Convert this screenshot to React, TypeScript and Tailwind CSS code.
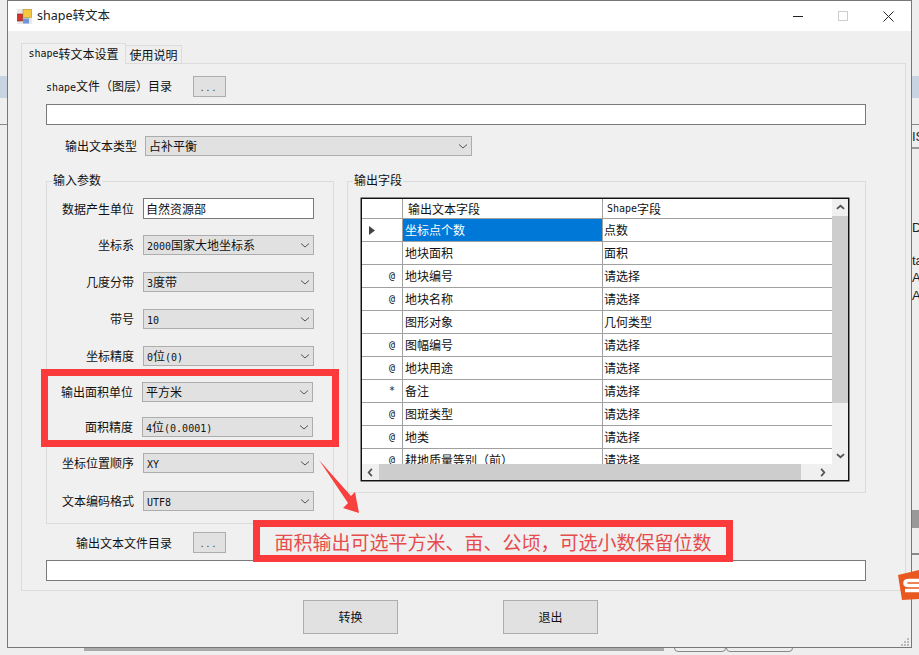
import type { ReactNode } from "react";

const rows: { mark: string; name: ReactNode; field: string }[] = [
  { mark: "", name: "坐标点个数", field: "点数" },
  { mark: "", name: "地块面积", field: "面积" },
  { mark: "@", name: "地块编号", field: "请选择" },
  { mark: "@", name: "地块名称", field: "请选择" },
  { mark: "", name: "图形对象", field: "几何类型" },
  { mark: "@", name: "图幅编号", field: "请选择" },
  { mark: "@", name: "地块用途", field: "请选择" },
  { mark: "*", name: "备注", field: "请选择" },
  { mark: "@", name: "图斑类型", field: "请选择" },
  { mark: "@", name: "地类", field: "请选择" },
  { mark: "@", name: "耕地质量等别（前）", field: "请选择" },
];

function M({ children }: { children: ReactNode }) {
  return <span className="font-['DejaVu_Sans_Mono',monospace] text-[10px]">{children}</span>;
}

function Chevron({ className, d, bold }: { className: string; d: string; bold?: boolean }) {
  return (
    <svg viewBox="0 0 10 10" className={className} fill="none" stroke="currentColor" strokeWidth={bold ? 2 : 1}>
      <path d={d} />
    </svg>
  );
}

function Combo({ value, width = "w-[171px]" }: { value: ReactNode; width?: string }) {
  return (
    <div className={`${width} flex h-[20px] items-center justify-between border border-[#adadad] bg-[#e1e1e1] pl-[3px] pr-[3px] text-[#111]`}>
      <span>{value}</span>
      <Chevron className="h-[10px] w-[10px] text-[#555]" d="M1 3.5 L5 7 L9 3.5" />
    </div>
  );
}

function Dots({ w = "w-[33px]", h = "h-[21px]" }: { w?: string; h?: string }) {
  return (
    <div className={`${w} ${h} flex items-center justify-center border border-[#adadad] bg-[#e1e1e1] text-[10px] tracking-[3px] text-[#333]`}>
      ...
    </div>
  );
}

function ParamRow({ label, mt, shift, children }: { label: string; mt: string; shift?: boolean; children: ReactNode }) {
  return (
    <div className={`flex items-center ${mt} ${shift ? "-translate-x-px" : ""}`}>
      <div className="w-[87px] text-right">{label}</div>
      <div className="ml-[9px]">{children}</div>
    </div>
  );
}

function Legend({ text, className }: { text: string; className: string }) {
  return <div className={`absolute top-[-9px] bg-[#f0f0f0] px-px leading-[14px] ${className}`}>{text}</div>;
}

export default function App() {
  return (
    <div className="relative h-[655px] w-[919px] overflow-hidden bg-[#eeeeee] font-['Noto_Sans_CJK_SC','Liberation_Sans',sans-serif] text-[12px] leading-none text-[#111]">
      {/* stuff behind the dialog */}
      <div className="absolute left-0 top-[76px] h-[22px] w-full bg-[#c8d4e2]" />
      <div className="absolute left-0 top-[124px] h-px w-full bg-[#888]" />
      <div className="absolute right-0 top-[147px] h-[2px] w-[8px] bg-[#999]" />
      <div className="absolute right-0 top-[510px] h-[18px] w-[8px] bg-[#999]" />
      <div className="absolute right-0 top-[553px] h-[2px] w-[8px] bg-[#888]" />
      <div className="absolute left-[912px] top-[130px] font-['Liberation_Sans',sans-serif] text-[13px] text-[#223]">IS</div>
      <div className="absolute left-[912px] top-[221px] font-['Liberation_Sans',sans-serif] text-[13px] text-[#222]">D</div>
      <div className="absolute left-[912px] top-[254px] font-['Liberation_Sans',sans-serif] text-[13px] text-[#222]">ta</div>
      <div className="absolute left-[912px] top-[271px] font-['Liberation_Sans',sans-serif] text-[13px] text-[#222]">A</div>
      <div className="absolute left-[912px] top-[289px] font-['Liberation_Sans',sans-serif] text-[13px] text-[#222]">A</div>
      <div className="absolute left-[84px] top-[648px] h-[3px] w-[580px] bg-[#aaa]" />
      <div className="absolute left-[674px] top-[640px] h-[12px] w-[52px] rounded-b-[4px] border border-[#888]" />
      <div className="absolute left-[726px] top-[640px] h-[12px] w-[67px] rounded-b-[4px] border border-[#888]" />

      {/* dialog */}
      <div className="relative ml-[7px] flex h-[648px] w-[905px] flex-col border border-[#777] bg-[#efefef]">
        <div className="flex h-[30px] shrink-0 items-center bg-white pl-[9px]">
          <svg viewBox="0 0 15 15" className="h-[15px] w-[15px]">
            <rect x="0" y="0" width="15" height="15" fill="#e8e8e8" />
            <rect x="6" y="0.5" width="8.5" height="8" fill="#f5c842" stroke="#b89020" strokeWidth="0.6" />
            <rect x="0.5" y="5" width="5" height="7" fill="#d8332c" stroke="#8a1f1a" strokeWidth="0.6" />
            <rect x="6" y="9.5" width="6" height="5" fill="#6f96d8" />
          </svg>
          <div className="ml-[5px] font-['Noto_Sans','Noto_Sans_CJK_SC',sans-serif] text-[12.5px] text-[#222]">shape转文本</div>
          <div className="ml-[683px] flex items-center">
            <div className="h-px w-[10px] bg-[#222]" />
            <div className="ml-[35px] h-[10px] w-[10px] border border-[#ccc]" />
            <svg viewBox="0 0 11 11" className="ml-[35px] h-[11px] w-[11px]" stroke="#222" fill="none">
              <path d="M0.5 0.5 L10.5 10.5 M10.5 0.5 L0.5 10.5" />
            </svg>
          </div>
        </div>

        <div className="flex-1 pl-[13px] pt-[12px]">
          {/* tabs */}
          <div className="flex h-[20px] items-end">
            <div className="relative z-10 -mb-px flex h-[21px] w-[105px] items-center justify-center border border-b-0 border-[#dcdcdc] bg-[#f0f0f0]">
              <M>shape</M>转文本设置
            </div>
            <div className="flex h-[18px] w-[56px] items-center justify-center border border-b-0 border-l-0 border-[#dcdcdc] bg-[#eeeeee]">使用说明</div>
          </div>

          {/* tab page */}
          <div className="h-[528px] w-[885px] border border-[#dcdcdc] bg-[#f0f0f0] pl-[24px] pt-[12px]">
            <div className="flex h-[21px] w-[820px] items-center">
              <div className="w-[147px]">
                <M>shape</M>文件（图层）目录
              </div>
              <Dots />
            </div>
            <div className="mt-[7px] h-[21px] w-[820px] border border-[#7a7a7a] bg-white" />
            <div className="mt-[11px] flex items-center">
              <div className="w-[91px] text-right">输出文本类型</div>
              <div className="ml-[8px]">
                <Combo value="占补平衡" width="w-[327px]" />
              </div>
            </div>

            <div className="mt-[25px] flex items-start">
              {/* left group */}
              <div className="relative h-[343px] w-[288px] border border-[#dcdcdc] pt-[16px]">
                <Legend text="输入参数" className="left-[5px]" />
                <ParamRow label="数据产生单位" mt="">
                  <div className="flex h-[21px] w-[171px] items-center border border-[#7a7a7a] bg-white pl-[2px]">自然资源部</div>
                </ParamRow>
                <ParamRow label="坐标系" mt="mt-[16px]">
                  <Combo value={<><M>2000</M>国家大地坐标系</>} />
                </ParamRow>
                <ParamRow label="几度分带" mt="mt-[17px]">
                  <Combo value={<><M>3</M>度带</>} />
                </ParamRow>
                <ParamRow label="带号" mt="mt-[17px]">
                  <Combo value={<M>10</M>} />
                </ParamRow>
                <ParamRow label="坐标精度" mt="mt-[17px]">
                  <Combo value={<><M>0</M>位<M>(0)</M></>} />
                </ParamRow>
                <ParamRow label="输出面积单位" mt="mt-[16px]" shift>
                  <Combo value="平方米" />
                </ParamRow>
                <ParamRow label="面积精度" mt="mt-[15px]" shift>
                  <Combo value={<><M>4</M>位<M>(0.0001)</M></>} />
                </ParamRow>
                <ParamRow label="坐标位置顺序" mt="mt-[16px]">
                  <Combo value={<M>XY</M>} />
                </ParamRow>
                <ParamRow label="文本编码格式" mt="mt-[18px]">
                  <Combo value={<M>UTF8</M>} />
                </ParamRow>
              </div>

              {/* right group */}
              <div className="relative ml-[13px] h-[312px] w-[519px] border border-[#dcdcdc] pl-[13px] pt-[16px]">
                <Legend text="输出字段" className="left-[5px]" />
                <div className="h-[283px] w-[488px] border border-[#111] bg-white shadow-[0_0_0_0.5px_#222]">
                  <div className="flex h-[265px]">
                    <div className="w-[470px] overflow-hidden">
                      <div className="grid h-[20px] grid-cols-[41px_200px_229px] border-b border-[#a0a0a0]">
                        <div className="border-r border-[#a0a0a0]" />
                        <div className="flex items-center border-r border-[#a0a0a0] pl-[5px]">输出文本字段</div>
                        <div className="flex items-center pl-[4px]">
                          <M>Shape</M>字段
                        </div>
                      </div>
                      {rows.map((row, i) => (
                        <div key={i} className="grid h-[23px] grid-cols-[41px_200px_229px] border-b border-[#a0a0a0]">
                          <div className="flex items-center justify-between border-r border-[#a0a0a0] pl-[7px] pr-[7px]">
                            {i === 0 ? (
                              <svg viewBox="0 0 6 9" className="h-[9px] w-[6px]">
                                <path d="M0 0 L6 4.5 L0 9 Z" fill="#444" />
                              </svg>
                            ) : (
                              <span />
                            )}
                            <M>{row.mark}</M>
                          </div>
                          <div className={`flex items-center border-r border-[#a0a0a0] pl-[2px] ${i === 0 ? "bg-[#0078d7] text-white" : ""}`}>{row.name}</div>
                          <div className="flex items-center pl-[1px]">{row.field}</div>
                        </div>
                      ))}
                    </div>
                    <div className="flex w-[16px] flex-col items-center bg-[#f0f0f0]">
                      <Chevron bold className="h-[17px] w-[9px] text-[#555]" d="M1 6.5 L5 3 L9 6.5" />
                      <div className="h-[187px] w-full bg-[#cdcdcd]" />
                      <div className="flex-1" />
                      <Chevron bold className="h-[17px] w-[9px] text-[#555]" d="M1 3.5 L5 7 L9 3.5" />
                    </div>
                  </div>
                  <div className="flex h-[16px] w-[486px] items-center bg-[#f0f0f0]">
                    <Chevron bold className="ml-[4px] h-[9px] w-[9px] text-[#555]" d="M6.5 1 L3 5 L6.5 9" />
                    <div className="ml-[4px] h-full w-[422px] bg-[#cdcdcd]" />
                    <Chevron bold className="ml-[17px] h-[9px] w-[9px] text-[#555]" d="M3.5 1 L7 5 L3.5 9" />
                  </div>
                </div>
              </div>
            </div>

            <div className="mt-[8px] flex h-[21px] items-center">
              <div className="w-[126px] text-right">输出文本文件目录</div>
              <div className="ml-[21px]">
                <Dots />
              </div>
            </div>
            <div className="mt-[7px] h-[21px] w-[820px] border border-[#7a7a7a] bg-white" />
          </div>

          <div className="mt-[9px] flex gap-[105px] pl-[282px]">
            <div className="flex h-[34px] w-[95px] items-center justify-center border border-[#adadad] bg-[#e1e1e1]">转换</div>
            <div className="flex h-[34px] w-[95px] items-center justify-center border border-[#adadad] bg-[#e1e1e1]">退出</div>
          </div>
        </div>

        <svg viewBox="0 0 8 8" className="absolute bottom-[1px] right-[2px] h-[8px] w-[8px]" fill="#bbb">
          <rect x="6" y="0" width="2" height="2" />
          <rect x="3" y="3" width="2" height="2" />
          <rect x="6" y="3" width="2" height="2" />
          <rect x="0" y="6" width="2" height="2" />
          <rect x="3" y="6" width="2" height="2" />
          <rect x="6" y="6" width="2" height="2" />
        </svg>
      </div>

      {/* red annotations on top of the screenshot */}
      <div className="absolute left-[41px] top-[369px] h-[78px] w-[298px] border-[7px] border-[#fb3a3c]" />
      <svg viewBox="0 0 50 60" className="absolute left-[315px] top-[457px] h-[60px] w-[50px]">
        <path d="M4 3 L36 39 L40 35 L44 56 L28 51 L33 46 Z" fill="#f8413f" />
      </svg>
      <div className="absolute left-[253px] top-[520px] flex h-[42px] w-[480px] items-center justify-center border-[7px] border-[#fb3a3c] text-[19px] text-[#e64c4c]">
        面积输出可选平方米、亩、公顷，可选小数保留位数
      </div>

      {/* input method badge */}
      <svg viewBox="0 0 21 30" className="absolute left-[898px] top-[570px] h-[30px] w-[21px]">
        <path d="M0 5 L21 0 V29 L4 30 Z" fill="#e9591f" />
        <path d="M21 10.5 H11 Q7 10.5 7 13 Q7 15.5 11 15.5 H21 M7 20.5 H21" fill="none" stroke="#fff" strokeWidth="3.6" />
      </svg>
    </div>
  );
}
